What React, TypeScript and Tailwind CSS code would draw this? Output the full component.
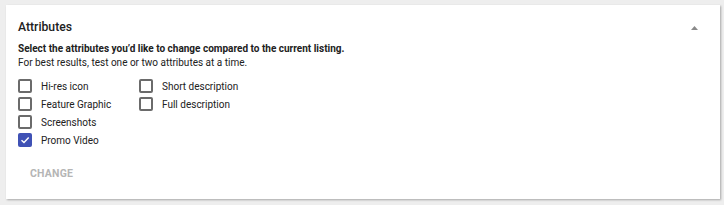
import { useState } from 'react';

const options = [
  { key: 'hires', label: 'Hi-res icon' },
  { key: 'short', label: 'Short description' },
  { key: 'feature', label: 'Feature Graphic' },
  { key: 'full', label: 'Full description' },
  { key: 'screens', label: 'Screenshots' },
  { key: 'blank1', label: '' },
  { key: 'promo', label: 'Promo Video' },
];

function Checkbox({ checked, label, onChange }: { checked: boolean; label: string; onChange: () => void }) {
  return (
    <label className="flex items-center h-[18px] cursor-pointer" onClick={onChange}>
      <span
        className={
          checked
            ? 'w-[14px] h-[14px] rounded-[2px] bg-[#3f51b5] flex items-center justify-center'
            : 'w-[14px] h-[14px] rounded-[2px] border-2 border-[#6b6b6b] bg-white'
        }
      >
        {checked && (
          <svg width="10" height="10" viewBox="0 0 10 10">
            <path d="M1.5 5.2 L4 7.6 L8.7 2.6" fill="none" stroke="white" strokeWidth="1.4" />
          </svg>
        )}
      </span>
      <span className="ml-[9px] text-[10px] text-[#212121]">{label}</span>
    </label>
  );
}

export default function App() {
  const [checked, setChecked] = useState<Record<string, boolean>>({ promo: true });

  const toggle = (key: string) => setChecked({ ...checked, [key]: !checked[key] });

  return (
    <div className="w-[724px] h-[205px] bg-[#eeeeee] pt-[5px] pl-[6px]" style={{ fontFamily: 'Roboto, "Liberation Sans", sans-serif' }}>
      <div className="w-[714px] h-[194px] bg-white shadow-[1px_1px_2px_rgba(0,0,0,0.3)] px-[12px] pt-[14px]">
        <div className="flex items-center justify-between">
          <h2 className="text-[12.2px] font-medium text-[#212121] leading-[16px]">Attributes</h2>
          <svg width="7" height="4" viewBox="0 0 7 4" className="mr-[10px] mt-[1px]">
            <path d="M0 4 L3.5 0 L7 4 Z" fill="#8a8a8a" />
          </svg>
        </div>
        <p className="mt-[7px] text-[10px] font-bold text-[#212121] leading-[14px]">
          Select the attributes you’d like to change compared to the current listing.
        </p>
        <p className="mt-0 text-[10px] text-[#212121] leading-[14px]">
          For best results, test one or two attributes at a time.
        </p>
        <div className="mt-[7px] grid grid-cols-[121px_200px]">
          {options.map((o) =>
            o.label ? (
              <Checkbox key={o.key} checked={!!checked[o.key]} label={o.label} onChange={() => toggle(o.key)} />
            ) : (
              <div key={o.key} />
            )
          )}
        </div>
        <button className="mt-[18px] ml-[12px] text-[10.5px] leading-[14px] font-bold text-[#b5b5b5] tracking-[0.2px]">CHANGE</button>
      </div>
    </div>
  );
}
